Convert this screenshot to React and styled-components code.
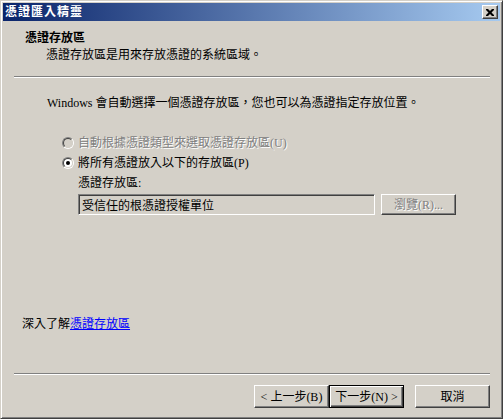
import React from 'react'
import styled, { createGlobalStyle } from 'styled-components'

const GlobalStyle = createGlobalStyle`
  html, body {
    margin: 0;
    padding: 0;
    background: #d4d0c8;
  }
  body {
    font-family: "Liberation Serif", "Noto Sans CJK TC", serif;
    font-size: 12px;
    color: #000;
  }
`

const Window = styled.div`
  box-sizing: border-box;
  width: 503px;
  height: 419px;
  display: flex;
  flex-direction: column;
  background: #d4d0c8;
  border: 1px solid;
  border-color: #d4d0c8 #404040 #404040 #d4d0c8;
  box-shadow: inset 1px 1px 0 #fff, inset -1px -1px 0 #808080;
  padding: 2px;
`

const TitleBar = styled.div`
  height: 18px;
  display: flex;
  align-items: center;
  justify-content: space-between;
  padding: 0 2px 0 2px;
  background: linear-gradient(to right, #0a246a, #a6caf0);
`

const TitleText = styled.span`
  color: #fff;
  font-weight: bold;
  font-size: 12px;
  letter-spacing: 1px;
  line-height: 14px;
`

const CloseButton = styled.div`
  box-sizing: border-box;
  width: 16px;
  height: 14px;
  display: flex;
  align-items: center;
  justify-content: center;
  background: #d4d0c8;
  border: 1px solid;
  border-color: #fff #404040 #404040 #fff;
  box-shadow: inset -1px -1px 0 #808080;
`

const Client = styled.div`
  flex: 1;
  display: flex;
  flex-direction: column;
`

const Header = styled.div`
  padding: 10px 0 0 22px;
  height: 45px;
`

const HeaderTitle = styled.div`
  font-weight: bold;
  line-height: 14px;
`

const HeaderSub = styled.div`
  margin: 3px 0 0 21px;
  line-height: 14px;
`

const Separator = styled.div`
  height: 1px;
  margin: 0 10px 0 11px;
  background: #808080;
  border-bottom: 1px solid #fff;
`

const Body = styled.div`
  flex: 1;
  padding: 18px 0 0 44px;
  display: flex;
  flex-direction: column;
`

const Line = styled.div`
  line-height: 14px;
`

const Options = styled.div`
  margin: 26px 0 0 15px;
  display: flex;
  flex-direction: column;
  gap: 6px;
`

const RadioRow = styled.div`
  display: flex;
  align-items: center;
  gap: 4px;
  height: 14px;
  line-height: 14px;
  color: ${p => (p.$disabled ? '#808080' : '#000')};
  text-shadow: ${p => (p.$disabled ? '1px 1px 0 #fff' : 'none')};
`

const RadioOuter = styled.span`
  box-sizing: border-box;
  width: 12px;
  height: 12px;
  flex: none;
  border-radius: 50%;
  border: 1px solid;
  border-color: #808080 #fff #fff #808080;
  display: flex;
`

const RadioInner = styled.span`
  box-sizing: border-box;
  flex: 1;
  border-radius: 50%;
  border: 1px solid;
  border-color: #404040 #d4d0c8 #d4d0c8 #404040;
  background: ${p => (p.$disabled ? '#d4d0c8' : '#fff')};
  display: flex;
  align-items: center;
  justify-content: center;
`

const RadioDot = styled.span`
  width: 4px;
  height: 4px;
  border-radius: 50%;
  background: #000;
`

const StoreField = styled.div`
  margin-left: 16px;
  display: flex;
  flex-direction: column;
  gap: 4px;
`

const FieldRow = styled.div`
  display: flex;
  gap: 6px;
`

const TextBox = styled.div`
  box-sizing: border-box;
  width: 297px;
  height: 21px;
  padding: 0 3px;
  display: flex;
  align-items: center;
  background: #d4d0c8;
  border: 1px solid;
  border-color: #808080 #fff #fff #808080;
  box-shadow: inset 1px 1px 0 #404040, inset -1px -1px 0 #d4d0c8;
`

const Button = styled.button`
  box-sizing: border-box;
  width: 75px;
  height: ${p => p.$h || 23}px;
  padding: 0;
  font: inherit;
  line-height: 14px;
  background: #d4d0c8;
  color: ${p => (p.disabled ? '#808080' : '#000')};
  text-shadow: ${p => (p.disabled ? '1px 1px 0 #fff' : 'none')};
  border: 1px solid;
  border-color: ${p => (p.$default ? '#000' : '#fff #404040 #404040 #fff')};
  box-shadow: ${p =>
    p.$default
      ? 'inset 1px 1px 0 #fff, inset -1px -1px 0 #404040, inset -2px -2px 0 #808080'
      : 'inset -1px -1px 0 #808080'};
`

const LearnMore = styled.div`
  margin: 0 0 42px 19px;
  line-height: 14px;
`

const Link = styled.a`
  color: #0000ff;
  text-decoration: underline;
  cursor: pointer;
`

const ButtonRow = styled.div`
  display: flex;
  justify-content: flex-end;
  padding: 10px 10px 8px 0;
`

const Gap = styled.span`
  width: ${p => p.$w}px;
`

function Radio({ checked, disabled }) {
  return (
    <RadioOuter>
      <RadioInner $disabled={disabled}>{checked && <RadioDot />}</RadioInner>
    </RadioOuter>
  )
}

export default function App() {
  return (
    <>
      <GlobalStyle />
      <Window>
        <TitleBar>
          <TitleText>憑證匯入精靈</TitleText>
          <CloseButton>
            <svg width="8" height="7" viewBox="0 0 8 7">
              <path d="M0 0h2l2 2 2-2h2v1l-2.5 2.5L8 6v1H6L4 5 2 7H0V6l2.5-2.5L0 1z" fill="#000" />
            </svg>
          </CloseButton>
        </TitleBar>
        <Client>
          <Header>
            <HeaderTitle>憑證存放區</HeaderTitle>
            <HeaderSub>憑證存放區是用來存放憑證的系統區域。</HeaderSub>
          </Header>
          <Separator />
          <Body>
            <Line>Windows 會自動選擇一個憑證存放區，您也可以為憑證指定存放位置。</Line>
            <Options>
              <RadioRow $disabled>
                <Radio disabled />
                自動根據憑證類型來選取憑證存放區(U)
              </RadioRow>
              <RadioRow>
                <Radio checked />
                將所有憑證放入以下的存放區(P)
              </RadioRow>
              <StoreField>
                <Line>憑證存放區:</Line>
                <FieldRow>
                  <TextBox>受信任的根憑證授權單位</TextBox>
                  <Button $h={21} disabled>瀏覽(R)...</Button>
                </FieldRow>
              </StoreField>
            </Options>
          </Body>
          <LearnMore>
            深入了解<Link>憑證存放區</Link>
          </LearnMore>
          <Separator />
          <ButtonRow>
            <Button>&lt; 上一步(B)</Button>
            <Button $default>下一步(N) &gt;</Button>
            <Gap $w={11} />
            <Button>取消</Button>
          </ButtonRow>
        </Client>
      </Window>
    </>
  )
}
